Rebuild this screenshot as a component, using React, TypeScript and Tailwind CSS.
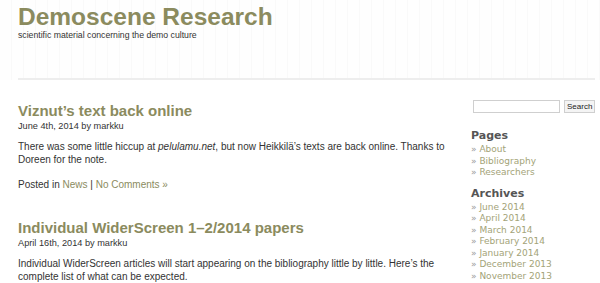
const olive = "text-[#8b8b5e]";

function Post({
  title,
  date,
  children,
  footer,
}: {
  title: string;
  date: string;
  children: React.ReactNode;
  footer?: boolean;
}) {
  return (
    <div className="mb-[28px]">
      <h2 className={`text-[15px] font-bold leading-[18px] ${olive}`}>{title}</h2>
      <div className="text-[9.2px] leading-[12px] text-[#333]">{date}</div>
      <p className="mt-[8px] text-[10px] leading-[13px] text-[#333]">{children}</p>
      {footer && (
        <div className="mt-[12px] text-[10px] leading-[13px] text-[#333]">
          Posted in <span className="text-[#8b8b5e]">News</span> |{" "}
          <span className="text-[#8b8b5e]">No Comments »</span>
        </div>
      )}
    </div>
  );
}

function SideList({ title, items }: { title: string; items: string[] }) {
  return (
    <div className="mb-[8px]">
      <h3 className="text-[11px] font-bold leading-[14px] text-[#555]">{title}</h3>
      <ul className="mt-[1px]">
        {items.map((item) => (
          <li key={item} className="text-[9px] leading-[11.5px] text-[#a3a378]">
            <span className="text-[#999]">»</span> {item}
          </li>
        ))}
      </ul>
    </div>
  );
}

export default function App() {
  return (
    <div className="w-[600px] h-[283px] overflow-hidden bg-white font-['Liberation_Sans',Arial,sans-serif]">
      {/* header */}
      <div className="h-[80px] px-[18px] bg-[repeating-linear-gradient(90deg,#fefefe_0px,#fefefe_11px,#f9f9f9_11px,#f9f9f9_12px)]">
        <h1 className={`pt-[3px] text-[24.5px] font-bold leading-[27px] ${olive}`}>Demoscene Research</h1>
        <div className="text-[8.7px] leading-[11px] text-[#333]">
          scientific material concerning the demo culture
        </div>
      </div>
      <div className="ml-[18px] mr-[5px] mt-[-2px] h-[2px] bg-[#ededed]" />

      <div className="flex pl-[18px] pr-[5px] pt-[22px]">
        {/* posts */}
        <div className="w-[427px] shrink-0">
          <Post title="Viznut’s text back online" date="June 4th, 2014 by markku" footer>
            There was some little hiccup at <em>pelulamu.net</em>, but now Heikkilä’s texts are back
            online. Thanks to Doreen for the note.
          </Post>
          <Post title="Individual WiderScreen 1–2/2014 papers" date="April 16th, 2014 by markku">
            Individual WiderScreen articles will start appearing on the bibliography little by
            little. Here’s the complete list of what can be expected.
          </Post>
        </div>

        {/* sidebar */}
        <div className="ml-[26px] flex-1 font-['DejaVu_Sans',Verdana,sans-serif]">
          <div className="flex items-center gap-[4px] -mt-[2px] ml-[2px]">
            <div className="h-[13px] w-[87px] border border-[#cfcfcf] bg-white" />
            <div className="h-[13px] px-[2px] border border-[#cfcfcf] bg-[#f4f4f4] text-[8px] leading-[11px] text-[#222] font-['Liberation_Sans',Arial,sans-serif]">
              Search
            </div>
          </div>
          <div className="mt-[16px]">
            <SideList title="Pages" items={["About", "Bibliography", "Researchers"]} />
            <SideList
              title="Archives"
              items={[
                "June 2014",
                "April 2014",
                "March 2014",
                "February 2014",
                "January 2014",
                "December 2013",
                "November 2013",
              ]}
            />
          </div>
        </div>
      </div>
    </div>
  );
}
